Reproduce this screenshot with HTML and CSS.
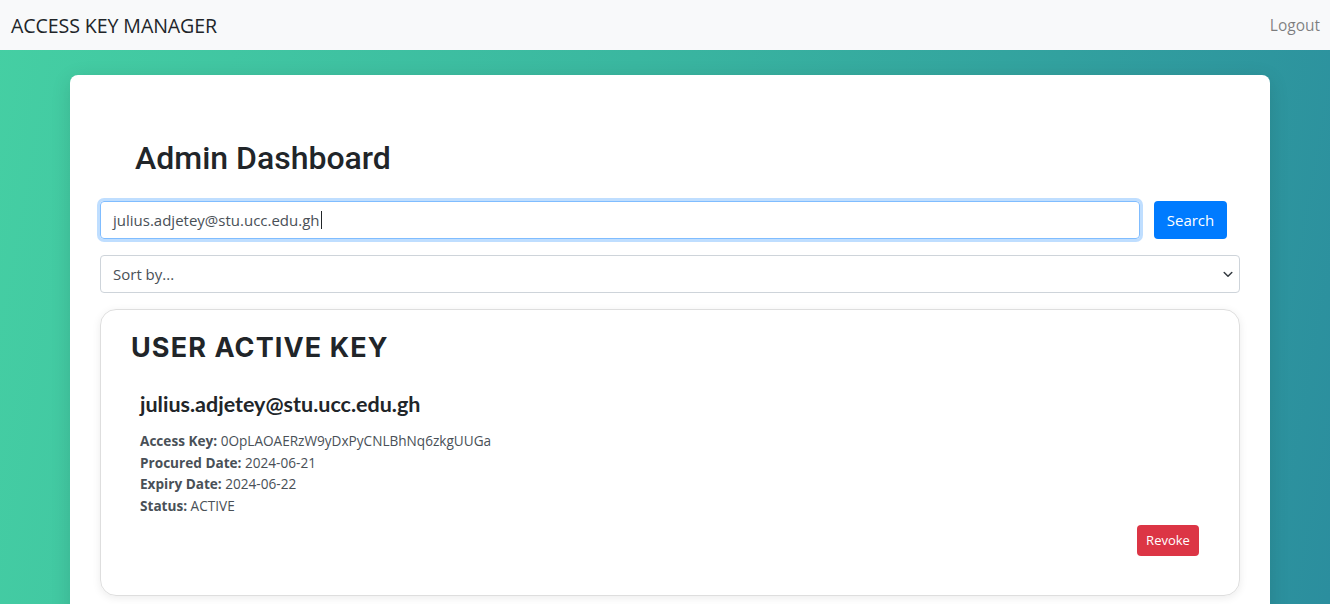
FILE: index.html
```html
<!DOCTYPE html>
<html>
<head>
<meta charset="utf-8">
<link rel="stylesheet" href="styles.css">
</head>
<body>
<nav class="navbar">
  <span class="brand">ACCESS KEY MANAGER</span>
  <a class="logout">Logout</a>
</nav>
<main class="page">
  <section class="panel">
    <h1 class="title">Admin Dashboard</h1>
    <div class="search-row">
      <div class="input focus">julius.adjetey@stu.ucc.edu.gh<span class="caret"></span></div>
      <button class="btn btn-primary">Search</button>
    </div>
    <div class="select">
      <span>Sort by...</span>
      <svg class="chev" width="10" height="7" viewBox="0 0 10 7"><path d="M1.2 1.5 L5 5.2 L8.8 1.5" fill="none" stroke="#343a40" stroke-width="1.5" stroke-linecap="round" stroke-linejoin="round"/></svg>
    </div>
    <div class="key-card">
      <h2 class="key-title">USER ACTIVE KEY</h2>
      <div class="key-body">
        <h3 class="email">julius.adjetey@stu.ucc.edu.gh</h3>
        <p class="line"><b>Access Key:</b> 0OpLAOAERzW9yDxPyCNLBhNq6zkgUUGa</p>
        <p class="line"><b>Procured Date:</b> 2024-06-21</p>
        <p class="line"><b>Expiry Date:</b> 2024-06-22</p>
        <p class="line"><b>Status:</b> ACTIVE</p>
        <div class="actions"><button class="btn btn-danger">Revoke</button></div>
      </div>
    </div>
  </section>
</main>
</body>
</html>
```
FILE: styles.css
```css
* { box-sizing: border-box; }
html, body { margin: 0; height: 100%; }
body {
  font-family: "Open Sans", "Noto Sans", sans-serif;
  color: #212529;
  overflow: hidden;
  background: linear-gradient(100deg, #45cfa3 0%, #3ab7a0 45%, #2b8e9e 100%);
}
.navbar {
  height: 50px;
  background: #f8f9fa;
  display: flex;
  align-items: center;
  justify-content: space-between;
  padding: 0 10px 0 11px;
}
.brand {
  font-size: 19.6px;
  letter-spacing: -0.1px;
  color: #212529;
}
.logout {
  font-size: 15.5px;
  color: rgba(0,0,0,0.5);
}
.page {
  padding: 25px 60px 0 70px;
}
.panel {
  background: #fff;
  border-radius: 8px;
  padding: 61px 30px 40px 30px;
  min-height: 600px;
  box-shadow: 0 4px 20px rgba(0,0,0,0.12);
}
.title {
  font-family: Roboto, sans-serif;
  font-weight: 500;
  font-size: 32px;
  margin: 0 0 21px 35px;
  line-height: 44px;
  color: #212529;
}
.search-row {
  display: flex;
  gap: 14px;
  align-items: center;
  margin-bottom: 16px;
}
.input {
  width: 1040px;
  height: 38px;
  border: 1px solid #80bdff;
  border-radius: 4px;
  box-shadow: 0 0 0 3px rgba(0,123,255,0.25);
  padding: 0 12px;
  display: flex;
  align-items: center;
  font-size: 15px;
  color: #495057;
}
.caret {
  display: inline-block;
  width: 1px;
  height: 18px;
  background: #212529;
  margin-left: 1px;
}
.btn {
  font-family: "Open Sans", sans-serif;
  border: none;
  color: #fff;
  border-radius: 4px;
  cursor: pointer;
}
.btn-primary {
  background: #007bff;
  height: 38px;
  width: 73px;
  font-size: 15px;
  padding: 0;
}
.select {
  height: 38px;
  border: 1px solid #ced4da;
  border-radius: 4px;
  display: flex;
  align-items: center;
  justify-content: space-between;
  padding: 0 6px 0 12px;
  font-size: 15px;
  color: #495057;
  margin-bottom: 16px;
}
.key-card {
  border: 1px solid #dedede;
  border-radius: 16px;
  box-shadow: 0 2px 8px rgba(0,0,0,0.08);
  padding: 20px 40px 40px 30px;
  height: 287px;
}
.key-title {
  font-family: "Inter", "DejaVu Sans", sans-serif;
  font-weight: 700;
  font-size: 27px;
  letter-spacing: 1.1px;
  margin: 0;
  line-height: 36px;
  color: #212529;
}
.key-body {
  padding: 26px 0 0 9px;
}
.email {
  font-family: "Lato", sans-serif;
  font-weight: 700;
  font-size: 21.5px;
  margin: 0 0 13px 0;
  line-height: 25px;
  color: #212529;
}
.line {
  margin: 0;
  font-size: 13.6px;
  line-height: 21.7px;
  color: #495057;
}
.line b { font-weight: 700; color: #495057; }
.actions {
  display: flex;
  justify-content: flex-end;
  margin-top: 8px;
}
.btn-danger {
  background: #dc3545;
  font-size: 13px;
  height: 31px;
  width: 62px;
  padding: 0;
}
```
